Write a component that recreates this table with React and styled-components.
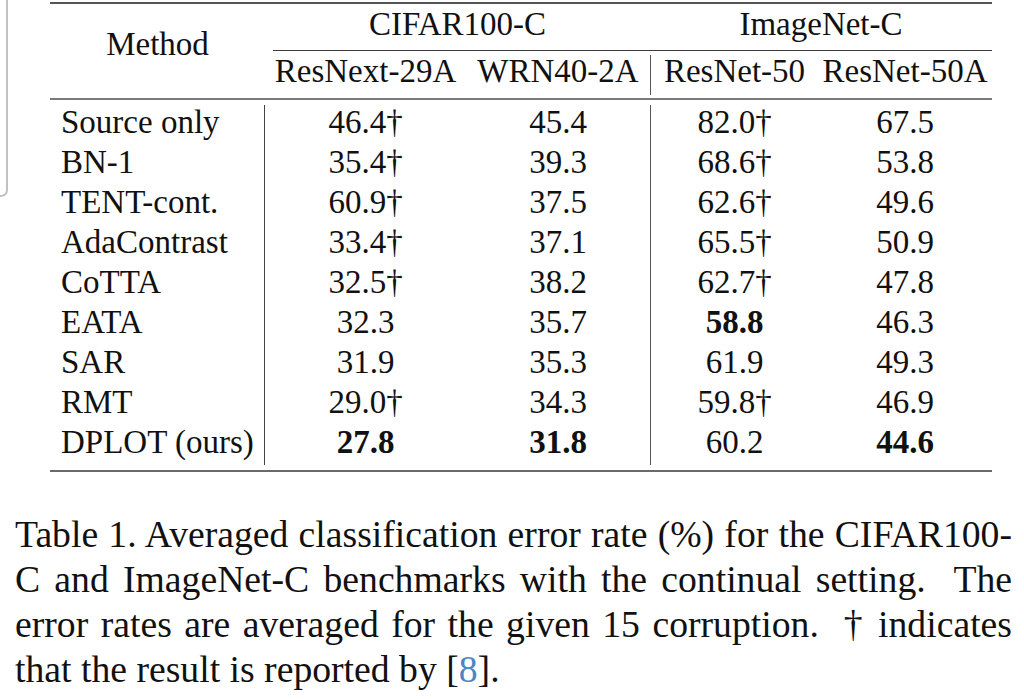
import React from 'react';
import styled, { createGlobalStyle } from 'styled-components';

const COLUMNS = '215px 201px 184px 168px 174px';

const rows = [
  { method: 'Source only', values: ['46.4†', '45.4', '82.0†', '67.5'] },
  { method: 'BN-1', values: ['35.4†', '39.3', '68.6†', '53.8'] },
  { method: 'TENT-cont.', values: ['60.9†', '37.5', '62.6†', '49.6'] },
  { method: 'AdaContrast', values: ['33.4†', '37.1', '65.5†', '50.9'] },
  { method: 'CoTTA', values: ['32.5†', '38.2', '62.7†', '47.8'] },
  { method: 'EATA', values: ['32.3', '35.7', '58.8', '46.3'], bold: [2] },
  { method: 'SAR', values: ['31.9', '35.3', '61.9', '49.3'] },
  { method: 'RMT', values: ['29.0†', '34.3', '59.8†', '46.9'] },
  { method: 'DPLOT (ours)', values: ['27.8', '31.8', '60.2', '44.6'], bold: [0, 1, 3] },
];

const GlobalStyle = createGlobalStyle`
  html, body {
    margin: 0;
    padding: 0;
    background: #ffffff;
  }
  body {
    font-family: 'Liberation Serif', 'Times New Roman', serif;
    color: #111111;
  }
`;

const Page = styled.div`
  position: relative;
  width: 1024px;
  height: 699px;
  overflow: hidden;
  padding-top: 2px;
  box-sizing: border-box;
`;

// leftover edge of a window frame peeking in at the left
const FrameEdge = styled.div`
  position: absolute;
  left: -20px;
  top: -20px;
  width: 28px;
  height: 217px;
  box-sizing: border-box;
  border: 2px solid #c2c2c2;
  border-radius: 0 0 7px 0;
`;

const Table = styled.div`
  margin-left: 50px;
  width: 942px;
  border-top: 2px solid #555555;
  border-bottom: 2px solid #6a6a6a;
  font-size: 33px;
`;

const Head = styled.div`
  display: grid;
  grid-template-columns: ${COLUMNS};
  grid-template-rows: 46px 1px 47px;
  border-bottom: 2px solid #7a7a7a;
`;

const MethodHead = styled.div`
  grid-column: 1;
  grid-row: 1 / span 3;
  padding-top: 20px;
  line-height: 40px;
  text-align: center;
`;

const GroupHead = styled.div`
  grid-row: 1;
  grid-column: ${props => props.$col};
  line-height: 40px;
  text-align: center;
`;

const CMidRule = styled.div`
  grid-row: 2;
  grid-column: 2 / span 4;
  margin-left: 8px;
  background: #3a3a3a;
`;

const SubHead = styled.div`
  grid-row: 3;
  height: 40px;
  margin: 4px 0 3px;
  line-height: 32px;
  text-align: center;
  white-space: nowrap;
  border-left: ${props => (props.$divider ? '1px solid #555555' : 'none')};
`;

const Body = styled.div`
  display: grid;
  grid-template-columns: ${COLUMNS};
  grid-auto-rows: 40px;
  padding: 5px 0;
`;

const Cell = styled.div`
  box-sizing: border-box;
  height: 40px;
  padding-bottom: 6px;
  line-height: 34px;
  white-space: nowrap;
  text-align: center;
  font-weight: ${props => (props.$bold ? 700 : 400)};
  border-left: ${props => (props.$divider ? '1px solid #555555' : 'none')};
`;

const MethodCell = styled(Cell)`
  text-align: left;
  padding-left: 11px;
  border-right: 1px solid #444444;
`;

const Caption = styled.div`
  margin: 40px 0 0 15px;
  width: 997px;
  font-size: 37.7px;
  line-height: 45px;
`;

const CaptionLine = styled.div`
  white-space: pre;
  text-align: ${props => (props.$last ? 'left' : 'justify')};
  text-align-last: ${props => (props.$last ? 'left' : 'justify')};
`;

const Ref = styled.span`
  color: #4a85c4;
`;

export default function App() {
  return (
    <>
      <GlobalStyle />
      <Page>
        <FrameEdge />
        <Table>
          <Head>
            <MethodHead>Method</MethodHead>
            <GroupHead $col="2 / span 2">CIFAR100-C</GroupHead>
            <GroupHead $col="4 / span 2">ImageNet-C</GroupHead>
            <CMidRule />
            <SubHead>ResNext-29A</SubHead>
            <SubHead>WRN40-2A</SubHead>
            <SubHead $divider>ResNet-50</SubHead>
            <SubHead>ResNet-50A</SubHead>
          </Head>
          <Body>
            {rows.map(row => (
              <React.Fragment key={row.method}>
                <MethodCell>{row.method}</MethodCell>
                {row.values.map((value, i) => (
                  <Cell
                    key={i}
                    $divider={i === 2}
                    $bold={row.bold && row.bold.includes(i)}
                  >
                    {value}
                  </Cell>
                ))}
              </React.Fragment>
            ))}
          </Body>
        </Table>
        <Caption>
          <CaptionLine>Table 1. Averaged classification error rate (%) for the CIFAR100-</CaptionLine>
          <CaptionLine>C and ImageNet-C benchmarks with the continual setting.  The</CaptionLine>
          <CaptionLine>error rates are averaged for the given 15 corruption.  † indicates</CaptionLine>
          <CaptionLine $last>
            that the result is reported by [<Ref>8</Ref>].
          </CaptionLine>
        </Caption>
      </Page>
    </>
  );
}
